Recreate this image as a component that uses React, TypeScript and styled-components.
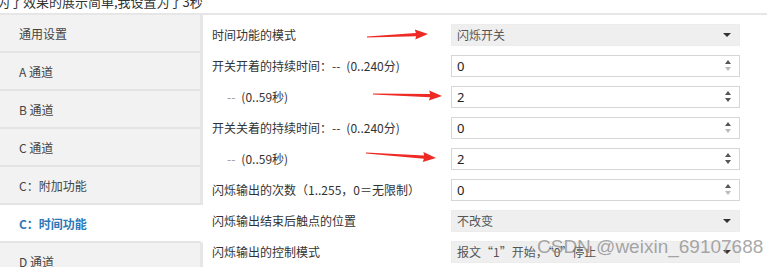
import React from "react";
import styled, { createGlobalStyle } from "styled-components";

const Global = createGlobalStyle`
  html, body { margin: 0; padding: 0; background: #ffffff; }
  body { font-family: "Noto Sans CJK SC", "Noto Sans", sans-serif; }
`;

const Page = styled.div`
  position: relative;
  width: 783px;
  height: 267px;
  overflow: hidden;
  background: #ffffff;
`;

const Caption = styled.div`
  margin: -5px 0 5px -3px;
  height: 13px;
  line-height: 13px;
  font-size: 13px;
  color: #333;
  white-space: nowrap;
`;

const Panel = styled.div`
  width: 767px;
  border-top: 2px solid #e6e6e6;
  display: flex;
  align-items: flex-start;
`;

const Sidebar = styled.div`
  width: 203px;
  display: flex;
  flex-direction: column;
  flex-shrink: 0;
`;

const SideItem = styled.div<{ $active?: boolean }>`
  height: 36px;
  display: flex;
  align-items: center;
  padding-left: 19px;
  font-size: 12px;
  background: ${(p) => (p.$active ? "#ffffff" : "#f2f2f2")};
  color: ${(p) => (p.$active ? "#2b78b8" : "#444")};
  font-weight: ${(p) => (p.$active ? 700 : 400)};
  border-bottom: 2px solid #e4e4e4;
  border-right: 3px solid ${(p) => (p.$active ? "#ffffff" : "#e6e6e6")};
`;

const Content = styled.div`
  flex: 1;
  padding: 4px 0 0 9px;
  display: grid;
  grid-template-columns: 239px 289px;
  grid-auto-rows: 31px;
  align-items: center;
`;

const Label = styled.div<{ $indent?: boolean }>`
  font-size: 12px;
  color: #333;
  white-space: nowrap;
  padding-left: ${(p) => (p.$indent ? "15px" : "0")};
`;

const Dash = styled.span<{ $light?: boolean }>`
  color: ${(p) => (p.$light ? "#999" : "#333")};
  margin-right: 6px;
`;

const Control = styled.div<{ $select?: boolean }>`
  height: 22px;
  box-sizing: border-box;
  display: flex;
  align-items: center;
  justify-content: space-between;
  padding: 0 8px 0 5px;
  font-size: 12px;
  background: ${(p) => (p.$select ? "#efefef" : "#ffffff")};
  border: ${(p) => (p.$select ? "1px solid #ececec" : "1.5px solid #d6d6d6")};
  color: ${(p) => (p.$select ? "#555" : "#222")};
`;

const Num = styled.span`
  font-family: "Noto Sans", "Open Sans", sans-serif;
  font-size: 13px;
`;

const Spinner = styled.div`
  display: flex;
  flex-direction: column;
  gap: 3px;
  align-items: center;
`;

const Tri = styled.div<{ $up?: boolean; $dim?: boolean }>`
  width: 0;
  height: 0;
  border-left: 3px solid transparent;
  border-right: 3px solid transparent;
  ${(p) =>
    p.$up
      ? `border-bottom: 4px solid ${p.$dim ? "#bbb" : "#555"};`
      : `border-top: 4px solid ${p.$dim ? "#bbb" : "#555"};`}
`;

const Caret = styled.div`
  width: 0;
  height: 0;
  border-left: 4px solid transparent;
  border-right: 4px solid transparent;
  border-top: 4px solid #333;
`;

const Overlay = styled.svg`
  position: absolute;
  left: 0;
  top: 0;
  pointer-events: none;
`;

const Watermark = styled.div`
  position: absolute;
  left: 537px;
  top: 236px;
  font-family: "Liberation Sans", Arial, sans-serif;
  font-size: 19px;
  color: rgba(130, 130, 130, 0.7);
  white-space: nowrap;
`;

const NumberField = ({ value, downDim }: { value: string; downDim?: boolean }) => (
  <Control>
    <Num>{value}</Num>
    <Spinner>
      <Tri $up />
      <Tri $dim={downDim} />
    </Spinner>
  </Control>
);

const SelectField = ({ text }: { text: string }) => (
  <Control $select>
    <span>{text}</span>
    <Caret />
  </Control>
);

const Arrow = ({ x1, y1, x2, y2 }: { x1: number; y1: number; x2: number; y2: number }) => {
  const dx = x2 - x1;
  const dy = y2 - y1;
  const len = Math.sqrt(dx * dx + dy * dy);
  const ux = dx / len;
  const uy = dy / len;
  const nx = -uy;
  const ny = ux;
  const head = 12;
  const bx = x2 - ux * head;
  const by = y2 - uy * head;
  const pts = [
    [x1 + nx * 0.5, y1 + ny * 0.5],
    [bx + nx * 1.6, by + ny * 1.6],
    [bx - ux * 1 + nx * 5, by - uy * 1 + ny * 5],
    [x2, y2],
    [bx - ux * 1 - nx * 5, by - uy * 1 - ny * 5],
    [bx - nx * 1.6, by - ny * 1.6],
    [x1 - nx * 0.5, y1 - ny * 0.5],
  ]
    .map((p) => p.map((v) => v.toFixed(1)).join(","))
    .join(" ");
  return <polygon points={pts} fill="#ee2a24" />;
};

const sideItems = ["通用设置", "A 通道", "B 通道", "C 通道", "C：附加功能", "C：时间功能", "D 通道"];

export default function App() {
  return (
    <>
      <Global />
      <Page>
        <Caption>为了效果的展示简单,我设置为了3秒</Caption>
        <Panel>
          <Sidebar>
            {sideItems.map((t) => (
              <SideItem key={t} $active={t === "C：时间功能"}>
                {t}
              </SideItem>
            ))}
          </Sidebar>
          <Content>
            <Label>时间功能的模式</Label>
            <SelectField text="闪烁开关" />

            <Label>
              开关开着的持续时间：<Dash>--</Dash>(0..240分)
            </Label>
            <NumberField value="0" downDim />

            <Label $indent>
              <Dash $light>--</Dash>(0..59秒)
            </Label>
            <NumberField value="2" />

            <Label>
              开关关着的持续时间：<Dash>--</Dash>(0..240分)
            </Label>
            <NumberField value="0" downDim />

            <Label $indent>
              <Dash $light>--</Dash>(0..59秒)
            </Label>
            <NumberField value="2" />

            <Label>闪烁输出的次数（1..255，0＝无限制）</Label>
            <NumberField value="0" downDim />

            <Label>闪烁输出结束后触点的位置</Label>
            <SelectField text="不改变" />

            <Label>闪烁输出的控制模式</Label>
            <SelectField text="报文“1”开始，“0”停止" />
          </Content>
        </Panel>
        <Overlay width="783" height="267" viewBox="0 0 783 267">
          <Arrow x1={367} y1={37} x2={428} y2={34} />
          <Arrow x1={373} y1={94} x2={442} y2={96} />
          <Arrow x1={366} y1={153} x2={436} y2={158} />
        </Overlay>
        <Watermark>CSDN @weixin_69107688</Watermark>
      </Page>
    </>
  );
}
